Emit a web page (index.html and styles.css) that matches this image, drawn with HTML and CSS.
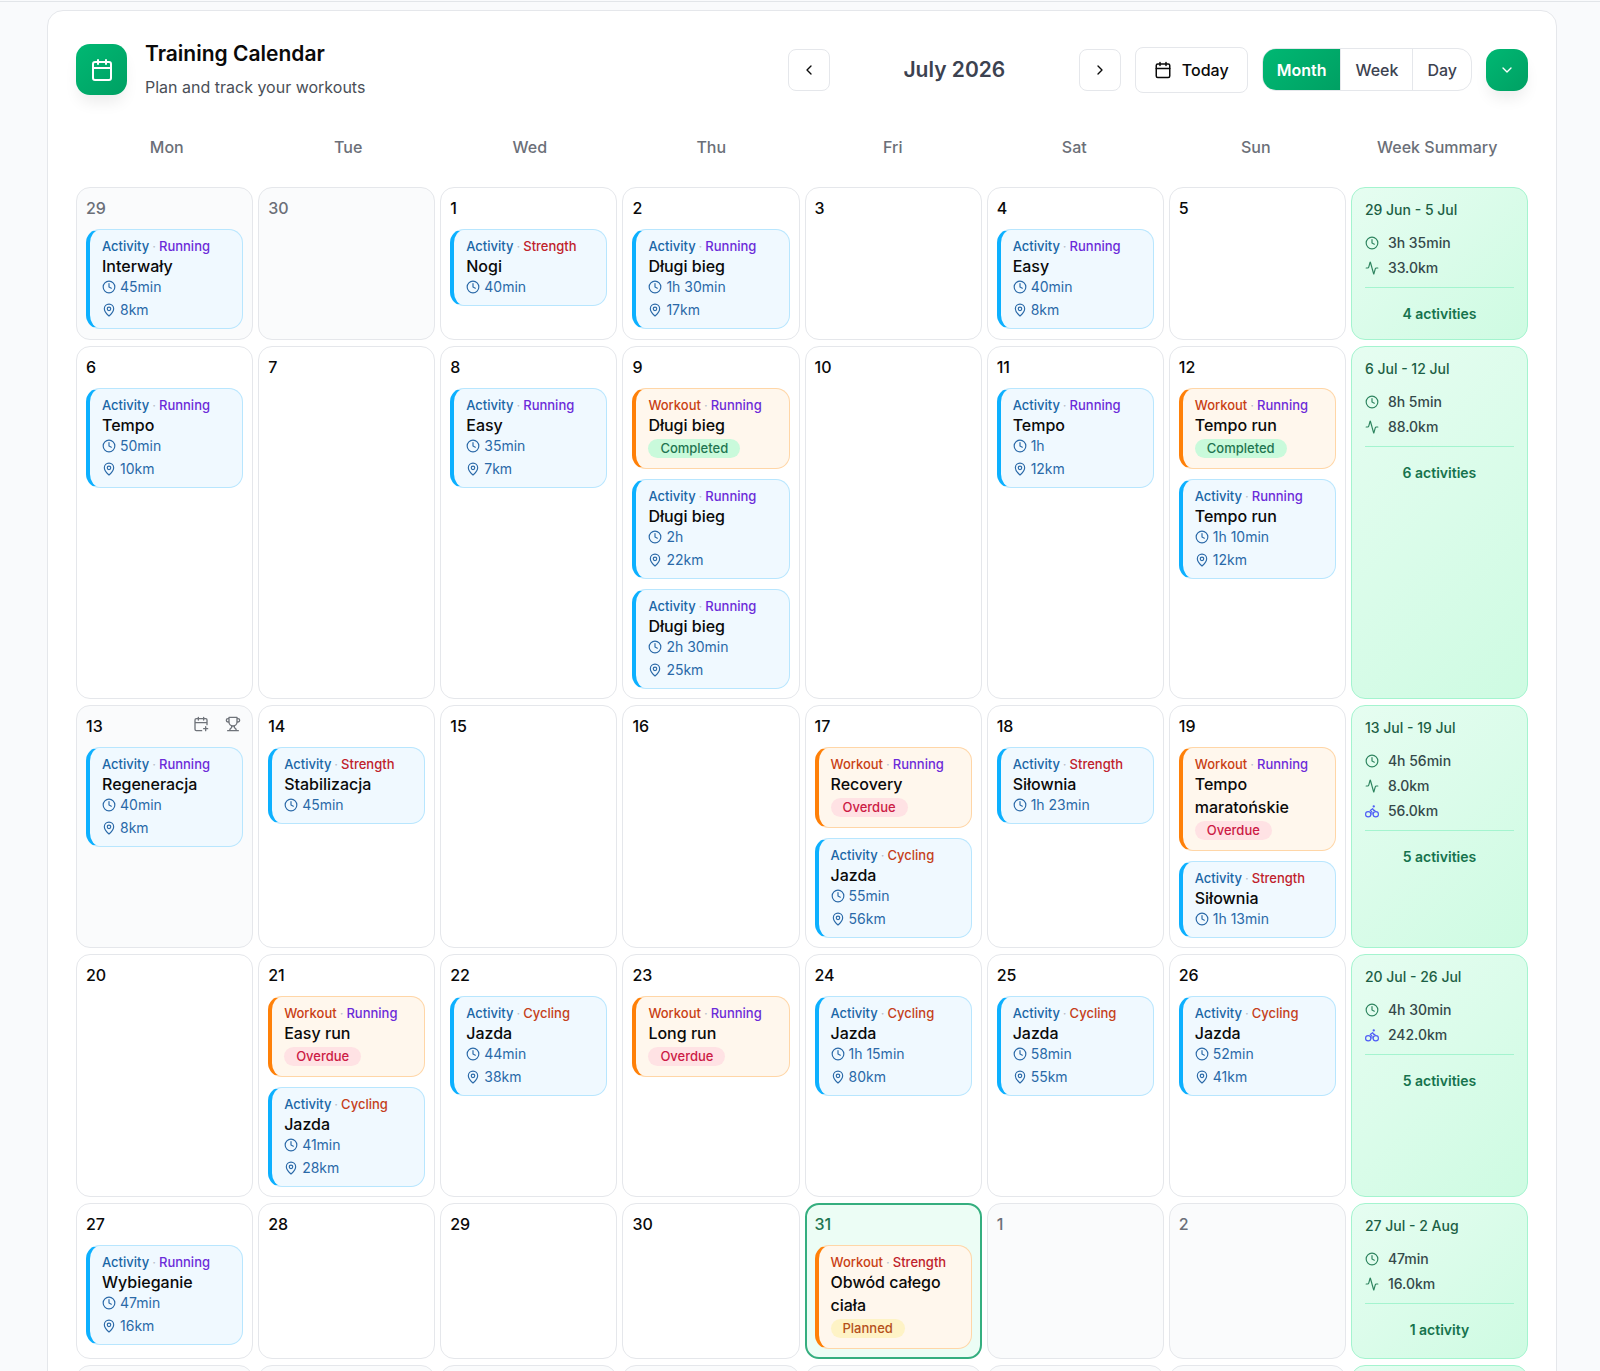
FILE: index.html
```html
<!DOCTYPE html>
<html lang="en">
<head>
  <meta charset="UTF-8">
  <meta name="viewport" content="width=device-width, initial-scale=1.0">
  <title>Training Calendar</title>
  <link rel="stylesheet" href="styles.css">
</head>

<body>
  <svg class="sprite" aria-hidden="true">
    <symbol id="calendar" viewBox="0 0 24 24">
      <path d="M8 2v4M16 2v4M3 10h18"/>
      <rect x="3" y="4" width="18" height="18" rx="2"/>
    </symbol>
    <symbol id="calendar-plus" viewBox="0 0 24 24">
      <path d="M8 2v4M16 2v4M3 10h18M21 13V6a2 2 0 0 0-2-2H5a2 2 0 0 0-2 2v14a2 2 0 0 0 2 2h8M16 19h6M19 16v6"/>
    </symbol>
    <symbol id="trophy" viewBox="0 0 24 24">
      <path d="M6 9H4.500a2.500 2.500 0 0 1 0-5H6M18 9h1.500a2.500 2.500 0 0 0 0-5H18M4 22h16M10 14.660V17c0 .55-.47.98-.97 1.210C7.850 18.750 7 20.240 7 22M14 14.660V17c0 .55.47.98.97 1.210C16.150 18.750 17 20.240 17 22M18 2H6v7a6 6 0 0 0 12 0V2Z"/>
    </symbol>
    <symbol id="left" viewBox="0 0 24 24"><path d="m15 18-6-6 6-6"/></symbol>
    <symbol id="right" viewBox="0 0 24 24"><path d="m9 18 6-6-6-6"/></symbol>
    <symbol id="down" viewBox="0 0 24 24"><path d="m6 9 6 6 6-6"/></symbol>
    <symbol id="clock" viewBox="0 0 24 24">
      <circle cx="12" cy="12" r="10"/>
      <path d="M12 6v6l4 2"/>
    </symbol>
    <symbol id="pin" viewBox="0 0 24 24">
      <path d="M20 10c0 5-5.540 10.190-7.400 11.800a1 1 0 0 1-1.200 0C9.540 20.190 4 15 4 10a8 8 0 0 1 16 0"/>
      <circle cx="12" cy="10" r="3"/>
    </symbol>
    <symbol id="pulse" viewBox="0 0 24 24">
      <path d="M22 12h-2.480a2 2 0 0 0-1.930 1.460l-2.350 8.360a.25.25 0 0 1-.48 0L9.240 2.180a.25.25 0 0 0-.48 0l-2.350 8.360A2 2 0 0 1 4.490 12H2"/>
    </symbol>
    <symbol id="bike" viewBox="0 0 24 24">
      <circle cx="18.500" cy="17.500" r="4.500"/>
      <circle cx="5.500" cy="17.500" r="4.500"/>
      <circle cx="15" cy="4" r="1"/>
      <path d="M12 17.500V14l-3-3 4-3 2 3h2"/>
    </symbol>
  </svg>

  <div class="topbar"></div>

  <main class="panel">
    <header class="header">
      <div class="brand">
        <span class="logo"><svg class="icon"><use href="#calendar"/></svg></span>
        <div>
          <h1>Training Calendar</h1>
          <p>Plan and track your workouts</p>
        </div>
      </div>
      <div class="controls">
        <button class="arrow" aria-label="Previous month"><svg class="icon"><use href="#left"/></svg></button>
        <h2>July 2026</h2>
        <button class="arrow" aria-label="Next month"><svg class="icon"><use href="#right"/></svg></button>
        <button class="today-btn"><svg class="icon"><use href="#calendar"/></svg>Today</button>
        <div class="views">
          <button class="active">Month</button>
          <button>Week</button>
          <button>Day</button>
        </div>
        <button class="more" aria-label="More"><svg class="icon"><use href="#down"/></svg></button>
      </div>
    </header>

    <div class="weekdays">
      <span>Mon</span>
      <span>Tue</span>
      <span>Wed</span>
      <span>Thu</span>
      <span>Fri</span>
      <span>Sat</span>
      <span>Sun</span>
      <span>Week Summary</span>
    </div>

    <div class="grid" id="grid"></div>
  </main>

  <script src="script.js"></script>
</body>
</html>
```

FILE: styles.css
```css
*{
  margin: 0;
  padding: 0;
  box-sizing: border-box;
}
body{
  height: 100vh;
  overflow: hidden;
  background: #f9fafc;
  font-family: Inter, "Liberation Sans", sans-serif;
  font-size: 16px;
  color: #0a0a0a;
}
button{
  font: inherit;
  color: inherit;
  border: none;
  background: none;
  cursor: pointer;
}
.sprite{
  position: absolute;
  width: 0;
  height: 0;
}
.icon{
  width: 16px;
  height: 16px;
  flex: none;
  fill: none;
  stroke: currentColor;
  stroke-width: 2;
  stroke-linecap: round;
  stroke-linejoin: round;
}
.topbar{
  height: 2px;
  border-bottom: 1px solid #e2e5e9;
}
.panel{
  margin: 8px 43px 0 47px;
  padding: 29px 28px;
  background: #fff;
  border: 1px solid #e5e7eb;
  border-radius: 16px;
}

/* header */
.header{
  display: flex;
  justify-content: space-between;
  align-items: center;
}
.brand{
  display: flex;
  align-items: center;
  gap: 18px;
}
.logo{
  display: flex;
  align-items: center;
  justify-content: center;
  width: 51px;
  height: 51px;
  border-radius: 14px;
  color: #fff;
  background: linear-gradient(135deg, #00b873, #00a063);
  box-shadow: 0 10px 15px -3px rgba(0, 0, 0, .08);
}
.logo .icon{
  width: 24px;
  height: 24px;
}
h1{
  font-size: 21px;
  line-height: 28px;
  font-weight: 600;
}
.brand p{
  margin-top: 7px;
  line-height: 24px;
  color: #4a4f57;
}
.controls{
  display: flex;
  align-items: center;
  gap: 14px;
}
.controls h2{
  width: 221px;
  text-align: center;
  font-size: 21px;
  font-weight: 600;
  color: #3c4250;
}
.arrow,
.today-btn,
.more{
  display: flex;
  align-items: center;
  justify-content: center;
}
.arrow{
  width: 42px;
  height: 42px;
  border: 1px solid #e5e7eb;
  border-radius: 8px;
}
.today-btn{
  height: 46px;
  padding: 0 18px;
  gap: 10px;
  border: 1px solid #e5e7eb;
  border-radius: 8px;
  font-weight: 500;
}
.today-btn .icon{
  width: 18px;
  height: 18px;
}
.views{
  display: flex;
  height: 43px;
  border: 1px solid #e5e7eb;
  border-radius: 14px;
  overflow: hidden;
}
.views button{
  padding: 0 14px;
  font-weight: 500;
  color: #3c4250;
}
.views button + button{
  border-left: 1px solid #e5e7eb;
}
.views .active{
  font-weight: 600;
  color: #fff;
  background: linear-gradient(135deg, #00b873, #00a063);
}
.more{
  width: 42px;
  height: 42px;
  border-radius: 14px;
  color: #fff;
  background: linear-gradient(135deg, #00b873, #00a063);
  box-shadow: 0 10px 15px -3px rgba(0, 0, 0, .08);
}

/* calendar */
.weekdays{
  display: grid;
  grid-template-columns: repeat(8, 1fr);
  margin: 36px 0 28px;
  line-height: 24px;
  text-align: center;
  font-weight: 500;
  color: #6b6f78;
}
.grid{
  display: grid;
  grid-template-columns: repeat(8, minmax(0, 1fr));
  gap: 6px 5px;
}
.day{
  min-height: 153px;
  padding: 8px 9px 9px;
  border: 1px solid #e5e7eb;
  border-radius: 14px;
}
.day-head{
  display: flex;
  justify-content: space-between;
  height: 24px;
  margin-bottom: 9px;
  line-height: 24px;
  font-weight: 500;
}
.day-tools{
  display: flex;
  gap: 16px;
  padding: 2px 2px 0 0;
}
.day-tools button{
  display: flex;
  height: 16px;
  color: #6f737a;
}
.muted,
.hover{
  background: #fafbfc;
}
.muted .day-head{
  color: #6b6f78;
}
.today{
  padding: 7px 8px 8px;
  border: 2px solid #35ae7f;
  background: #ecfdf5;
}
.today .day-head{
  color: #1f7550;
}

/* entries */
.entry{
  padding: 8px 11px 10px 12px;
  border: 1px solid #b8e6fe;
  border-left: 4px solid #0cb0ff;
  border-radius: 14px;
  background: #f0f9ff;
  cursor: pointer;
}
.entry + .entry{
  margin-top: 10px;
}
.entry-type{
  display: flex;
  gap: 3px;
  line-height: 17px;
  font-size: 13px;
  font-weight: 500;
  color: #1a66a6;
}
.entry-type i{
  font-style: normal;
  font-weight: 400;
  color: #b9c0ca;
}
.entry-type .running{
  color: #6c2bd9;
}
.entry-type .strength{
  color: #c0212b;
}
.entry-type .cycling{
  color: #c5401a;
}
.entry h3{
  line-height: 23px;
  font-size: 16px;
  font-weight: 500;
}
.meta{
  display: flex;
  align-items: center;
  gap: 4px;
  line-height: 17px;
  font-size: 14px;
  color: #2a69a8;
}
.meta + .meta{
  margin-top: 6px;
}
.meta .icon{
  width: 14px;
  height: 14px;
}
.workout{
  border-color: #ffd6a7;
  border-left-color: #ff8008;
  background: #fff7ed;
}
.workout .entry-type{
  color: #c93f14;
}
.badge{
  display: block;
  width: fit-content;
  margin-top: 2px;
  padding: 0 12px;
  line-height: 19px;
  border-radius: 10px;
  font-size: 13px;
  font-weight: 500;
}
.completed{
  color: #1f7550;
  background: #c9fadb;
}
.overdue{
  color: #cc1a45;
  background: #ffe2e4;
}
.planned{
  color: #b5501a;
  background: #fef3c6;
}

/* week summary */
.summary{
  padding: 12px 13px;
  border: 1px solid #a4f4cf;
  border-radius: 14px;
  background: linear-gradient(135deg, #e6fdf1, #cefbe2);
  font-size: 14px;
}
.summary h4{
  margin-bottom: 13px;
  line-height: 20px;
  font-weight: 500;
  color: #1c5f45;
}
.total{
  display: flex;
  align-items: center;
  gap: 9px;
  margin-bottom: 5px;
  line-height: 20px;
  font-weight: 500;
  color: #35494a;
}
.total .icon{
  width: 14px;
  height: 14px;
  color: #2f8560;
}
.total .bike{
  color: #4f5df6;
}
.count{
  margin-top: 9px;
  padding-top: 16px;
  border-top: 1px solid #a4f4cf;
  line-height: 20px;
  text-align: center;
  font-weight: 600;
  color: #16734d;
}
```

FILE: script.js
```js
// a = activity, w = workout: [kind, sport, title, time or status, distance]
var weeks = [
  {
    label: '29 Jun - 5 Jul', totals: [['clock', '3h 35min'], ['pulse', '33.0km']], count: '4 activities',
    days: {
      29: [['a', 'Running', 'Interwały', '45min', '8km']],
      1: [['a', 'Strength', 'Nogi', '40min']],
      2: [['a', 'Running', 'Długi bieg', '1h 30min', '17km']],
      4: [['a', 'Running', 'Easy', '40min', '8km']]
    },
    dates: [29, 30, 1, 2, 3, 4, 5], muted: [29, 30]
  },
  {
    label: '6 Jul - 12 Jul', totals: [['clock', '8h 5min'], ['pulse', '88.0km']], count: '6 activities',
    days: {
      6: [['a', 'Running', 'Tempo', '50min', '10km']],
      8: [['a', 'Running', 'Easy', '35min', '7km']],
      9: [
        ['w', 'Running', 'Długi bieg', 'Completed'],
        ['a', 'Running', 'Długi bieg', '2h', '22km'],
        ['a', 'Running', 'Długi bieg', '2h 30min', '25km']
      ],
      11: [['a', 'Running', 'Tempo', '1h', '12km']],
      12: [
        ['w', 'Running', 'Tempo run', 'Completed'],
        ['a', 'Running', 'Tempo run', '1h 10min', '12km']
      ]
    },
    dates: [6, 7, 8, 9, 10, 11, 12], muted: []
  },
  {
    label: '13 Jul - 19 Jul', totals: [['clock', '4h 56min'], ['pulse', '8.0km'], ['bike', '56.0km']], count: '5 activities',
    days: {
      13: [['a', 'Running', 'Regeneracja', '40min', '8km']],
      14: [['a', 'Strength', 'Stabilizacja', '45min']],
      17: [
        ['w', 'Running', 'Recovery', 'Overdue'],
        ['a', 'Cycling', 'Jazda', '55min', '56km']
      ],
      18: [['a', 'Strength', 'Siłownia', '1h 23min']],
      19: [
        ['w', 'Running', 'Tempo maratońskie', 'Overdue'],
        ['a', 'Strength', 'Siłownia', '1h 13min']
      ]
    },
    dates: [13, 14, 15, 16, 17, 18, 19], muted: [], hover: 13
  },
  {
    label: '20 Jul - 26 Jul', totals: [['clock', '4h 30min'], ['bike', '242.0km']], count: '5 activities',
    days: {
      21: [
        ['w', 'Running', 'Easy run', 'Overdue'],
        ['a', 'Cycling', 'Jazda', '41min', '28km']
      ],
      22: [['a', 'Cycling', 'Jazda', '44min', '38km']],
      23: [['w', 'Running', 'Long run', 'Overdue']],
      24: [['a', 'Cycling', 'Jazda', '1h 15min', '80km']],
      25: [['a', 'Cycling', 'Jazda', '58min', '55km']],
      26: [['a', 'Cycling', 'Jazda', '52min', '41km']]
    },
    dates: [20, 21, 22, 23, 24, 25, 26], muted: []
  },
  {
    label: '27 Jul - 2 Aug', totals: [['clock', '47min'], ['pulse', '16.0km']], count: '1 activity',
    days: {
      27: [['a', 'Running', 'Wybieganie', '47min', '16km']],
      31: [['w', 'Strength', 'Obwód całego ciała', 'Planned']]
    },
    dates: [27, 28, 29, 30, 31, 1, 2], muted: [1, 2], today: 31
  }
]

function icon(name){
  return `<svg class="icon ${name}"><use href="#${name}"/></svg>`
}

function entry(e){
  var workout = e[0] === 'w'
  var html = `<article class="entry ${workout ? 'workout' : ''}">
    <div class="entry-type"><span>${workout ? 'Workout' : 'Activity'}</span><i>·</i><span class="${e[1].toLowerCase()}">${e[1]}</span></div>
    <h3>${e[2]}</h3>`
  if(workout){
    html += `<span class="badge ${e[3].toLowerCase()}">${e[3]}</span>`
  }else{
    html += `<div class="meta">${icon('clock')}${e[3]}</div>`
    if(e[4]){
      html += `<div class="meta">${icon('pin')}${e[4]}</div>`
    }
  }
  return html + '</article>'
}

function day(week, n){
  var cls = 'day'
  var tools = ''
  if(week.muted.includes(n)) cls += ' muted'
  if(week.today === n) cls += ' today'
  if(week.hover === n){
    cls += ' hover'
    tools = `<div class="day-tools">
      <button aria-label="Add workout">${icon('calendar-plus')}</button>
      <button aria-label="Add race">${icon('trophy')}</button>
    </div>`
  }
  var entries = (week.days[n] || []).map(entry).join('')
  return `<div class="${cls}"><div class="day-head"><span>${n}</span>${tools}</div>${entries}</div>`
}

function summary(week){
  var totals = week.totals.map(t => `<div class="total">${icon(t[0])}${t[1]}</div>`).join('')
  return `<div class="summary"><h4>${week.label}</h4>${totals}<div class="count">${week.count}</div></div>`
}

var html = weeks.map(week => {
  return week.dates.map(n => day(week, n)).join('') + summary(week)
}).join('')

// trailing week, not filled yet
html += '<div class="day muted"></div>'.repeat(7) + '<div class="summary"></div>'

document.getElementById('grid').innerHTML = html
```
